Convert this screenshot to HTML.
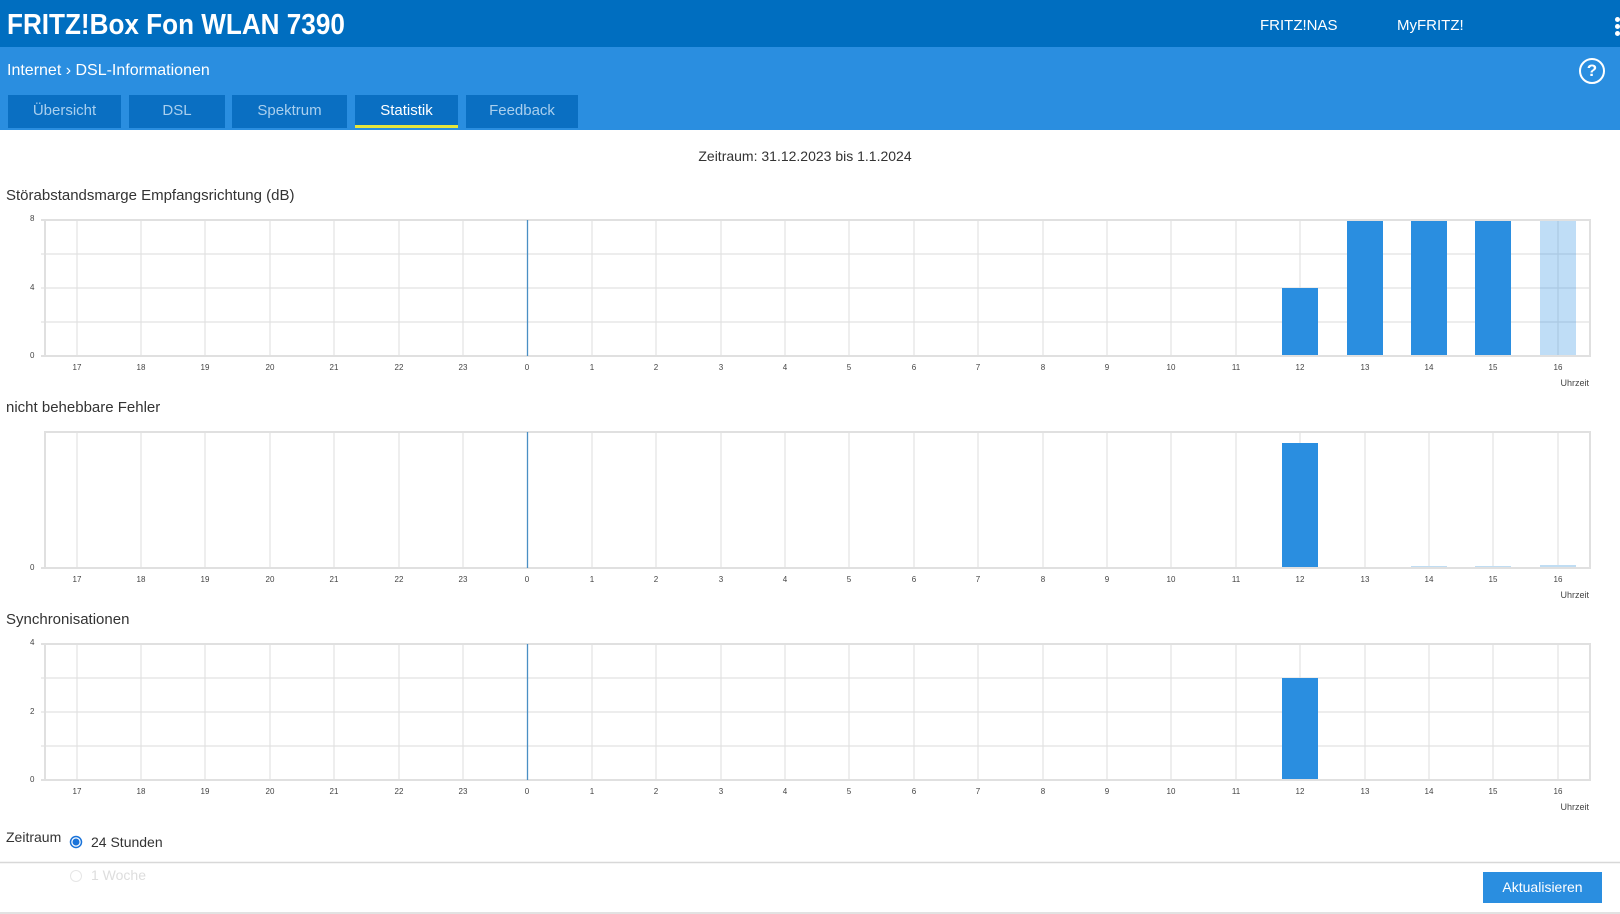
<!DOCTYPE html>
<html><head><meta charset="utf-8"><style>
*{margin:0;padding:0;box-sizing:border-box}
body{width:1620px;height:914px;overflow:hidden;background:#fff;font-family:"Liberation Sans",sans-serif;position:relative;color:#333}
.top{position:absolute;left:0;top:0;width:1620px;height:47px;background:#006ec0}
.title{position:absolute;left:7px;top:9px;font-size:29px;font-weight:bold;color:#fff;transform:scaleX(0.9);transform-origin:0 0}
.toplink{position:absolute;top:17px;font-size:15px;color:#fff}
.band{position:absolute;left:0;top:47px;width:1620px;height:83px;background:#2a8ee0}
.crumb{position:absolute;left:7px;top:15px;font-size:16px;color:#fff}
.tab{position:absolute;top:95px;height:33px;background:#0a6fc2;color:#a9cfee;font-size:15px;text-align:center;line-height:31px}
.tab.act{color:#fff;border-bottom:3px solid #e6e63c}
.help{position:absolute;left:1579px;top:11px;width:26px;height:26px;border:2.5px solid #fff;border-radius:50%;color:#fff;font-weight:bold;font-size:17px;text-align:center;line-height:21px}
.dots{position:absolute;left:1615px;top:17px;width:5px}
.dots i{display:block;width:5px;height:5px;border-radius:50%;background:#fff;margin-bottom:2px}
.h{position:absolute;left:6px;font-size:15px;color:#333}
svg{position:absolute;left:0;top:0}
</style></head><body>
<div class="top"><div class="title">FRITZ!Box Fon WLAN 7390</div>
<div class="toplink" style="left:1260px">FRITZ!NAS</div>
<div class="toplink" style="left:1397px">MyFRITZ!</div>
<div class="dots"><i></i><i></i><i></i></div></div>
<div class="band"><div class="crumb">Internet &#x203A; DSL-Informationen</div><div class="help">?</div></div>
<div class="tab" style="left:8px;width:113px">Übersicht</div>
<div class="tab" style="left:129px;width:96px">DSL</div>
<div class="tab" style="left:232px;width:115px">Spektrum</div>
<div class="tab act" style="left:355px;width:103px">Statistik</div>
<div class="tab" style="left:466px;width:112px">Feedback</div>
<div style="position:absolute;left:0;width:1610px;top:148px;text-align:center;font-size:14px;color:#333">Zeitraum: 31.12.2023 bis 1.1.2024</div>
<div class="h" style="top:187px">Störabstandsmarge Empfangsrichtung (dB)</div>
<div class="h" style="top:399px">nicht behebbare Fehler</div>
<div class="h" style="top:611px">Synchronisationen</div>

<svg width="1620" height="914" font-family="Liberation Sans, sans-serif" font-size="8" fill="#444">
<defs>
<g id="vg" stroke="#e2e2e2" stroke-width="1.2">
<line x1="77" y1="0" x2="77" y2="136"/><line x1="141" y1="0" x2="141" y2="136"/><line x1="205" y1="0" x2="205" y2="136"/><line x1="270" y1="0" x2="270" y2="136"/><line x1="334" y1="0" x2="334" y2="136"/><line x1="399" y1="0" x2="399" y2="136"/><line x1="463" y1="0" x2="463" y2="136"/><line x1="592" y1="0" x2="592" y2="136"/><line x1="656" y1="0" x2="656" y2="136"/><line x1="721" y1="0" x2="721" y2="136"/><line x1="785" y1="0" x2="785" y2="136"/><line x1="849" y1="0" x2="849" y2="136"/><line x1="914" y1="0" x2="914" y2="136"/><line x1="978" y1="0" x2="978" y2="136"/><line x1="1043" y1="0" x2="1043" y2="136"/><line x1="1107" y1="0" x2="1107" y2="136"/><line x1="1171" y1="0" x2="1171" y2="136"/><line x1="1236" y1="0" x2="1236" y2="136"/><line x1="1300" y1="0" x2="1300" y2="136"/><line x1="1365" y1="0" x2="1365" y2="136"/><line x1="1429" y1="0" x2="1429" y2="136"/><line x1="1493" y1="0" x2="1493" y2="136"/><line x1="1558" y1="0" x2="1558" y2="136"/>
</g>
</defs>
<g transform="translate(0,220)">
<use href="#vg"/>
<g stroke="#e2e2e2" stroke-width="1.2"><line x1="41" y1="34" x2="1590" y2="34"/><line x1="41" y1="68" x2="1590" y2="68"/><line x1="41" y1="102" x2="1590" y2="102"/></g>
<rect x="1282" y="68" width="36" height="68" fill="#2a8ee0"/>
<rect x="1347" y="0" width="36" height="136" fill="#2a8ee0"/>
<rect x="1411" y="0" width="36" height="136" fill="#2a8ee0"/>
<rect x="1475" y="0" width="36" height="136" fill="#2a8ee0"/>
<rect x="1540" y="0" width="36" height="136" fill="#2a8ee0" opacity="0.3"/>
<rect x="45" y="0" width="1545" height="136" fill="none" stroke="#e0e0e0" stroke-width="2"/>
<line x1="41" y1="0" x2="45" y2="0" stroke="#e0e0e0" stroke-width="2"/><line x1="41" y1="136" x2="45" y2="136" stroke="#e0e0e0" stroke-width="2"/>
<line x1="527.5" y1="0" x2="527.5" y2="136" stroke="#4a8fc4" stroke-width="1.3"/>
<text x="30" y="1">8</text><text x="30" y="70">4</text><text x="30" y="138">0</text>
<g text-anchor="middle"><text x="77" y="150">17</text><text x="141" y="150">18</text><text x="205" y="150">19</text><text x="270" y="150">20</text><text x="334" y="150">21</text><text x="399" y="150">22</text><text x="463" y="150">23</text><text x="527" y="150">0</text><text x="592" y="150">1</text><text x="656" y="150">2</text><text x="721" y="150">3</text><text x="785" y="150">4</text><text x="849" y="150">5</text><text x="914" y="150">6</text><text x="978" y="150">7</text><text x="1043" y="150">8</text><text x="1107" y="150">9</text><text x="1171" y="150">10</text><text x="1236" y="150">11</text><text x="1300" y="150">12</text><text x="1365" y="150">13</text><text x="1429" y="150">14</text><text x="1493" y="150">15</text><text x="1558" y="150">16</text></g>
<text x="1589" y="166" text-anchor="end" font-size="9">Uhrzeit</text>
</g>
<g transform="translate(0,432)">
<use href="#vg"/>
<rect x="1282" y="11" width="36" height="125" fill="#2a8ee0"/>
<rect x="1411" y="134" width="36" height="2" fill="#c0ddf3"/><rect x="1475" y="134" width="36" height="2" fill="#c0ddf3"/><rect x="1540" y="133" width="36" height="3" fill="#c0ddf3"/>
<rect x="45" y="0" width="1545" height="136" fill="none" stroke="#e0e0e0" stroke-width="2"/>
<line x1="41" y1="136" x2="45" y2="136" stroke="#e0e0e0" stroke-width="2"/>
<line x1="527.5" y1="0" x2="527.5" y2="136" stroke="#4a8fc4" stroke-width="1.3"/>
<text x="30" y="138">0</text>
<g text-anchor="middle"><text x="77" y="150">17</text><text x="141" y="150">18</text><text x="205" y="150">19</text><text x="270" y="150">20</text><text x="334" y="150">21</text><text x="399" y="150">22</text><text x="463" y="150">23</text><text x="527" y="150">0</text><text x="592" y="150">1</text><text x="656" y="150">2</text><text x="721" y="150">3</text><text x="785" y="150">4</text><text x="849" y="150">5</text><text x="914" y="150">6</text><text x="978" y="150">7</text><text x="1043" y="150">8</text><text x="1107" y="150">9</text><text x="1171" y="150">10</text><text x="1236" y="150">11</text><text x="1300" y="150">12</text><text x="1365" y="150">13</text><text x="1429" y="150">14</text><text x="1493" y="150">15</text><text x="1558" y="150">16</text></g>
<text x="1589" y="166" text-anchor="end" font-size="9">Uhrzeit</text>
</g>
<g transform="translate(0,644)">
<use href="#vg"/>
<g stroke="#e2e2e2" stroke-width="1.2"><line x1="41" y1="34" x2="1590" y2="34"/><line x1="41" y1="68" x2="1590" y2="68"/><line x1="41" y1="102" x2="1590" y2="102"/></g>
<rect x="1282" y="34" width="36" height="102" fill="#2a8ee0"/>
<rect x="45" y="0" width="1545" height="136" fill="none" stroke="#e0e0e0" stroke-width="2"/>
<line x1="41" y1="0" x2="45" y2="0" stroke="#e0e0e0" stroke-width="2"/><line x1="41" y1="136" x2="45" y2="136" stroke="#e0e0e0" stroke-width="2"/>
<line x1="527.5" y1="0" x2="527.5" y2="136" stroke="#4a8fc4" stroke-width="1.3"/>
<text x="30" y="1">4</text><text x="30" y="70">2</text><text x="30" y="138">0</text>
<g text-anchor="middle"><text x="77" y="150">17</text><text x="141" y="150">18</text><text x="205" y="150">19</text><text x="270" y="150">20</text><text x="334" y="150">21</text><text x="399" y="150">22</text><text x="463" y="150">23</text><text x="527" y="150">0</text><text x="592" y="150">1</text><text x="656" y="150">2</text><text x="721" y="150">3</text><text x="785" y="150">4</text><text x="849" y="150">5</text><text x="914" y="150">6</text><text x="978" y="150">7</text><text x="1043" y="150">8</text><text x="1107" y="150">9</text><text x="1171" y="150">10</text><text x="1236" y="150">11</text><text x="1300" y="150">12</text><text x="1365" y="150">13</text><text x="1429" y="150">14</text><text x="1493" y="150">15</text><text x="1558" y="150">16</text></g>
<text x="1589" y="166" text-anchor="end" font-size="9">Uhrzeit</text>
</g>
<circle cx="76" cy="842" r="5.5" fill="#fff" stroke="#1a73d9" stroke-width="1.5"/><circle cx="76" cy="842" r="3.5" fill="#1a73d9"/>
<circle cx="76" cy="876" r="5.5" fill="#fff" stroke="#e6e6e6" stroke-width="1"/>
<line x1="0" y1="862.5" x2="1620" y2="862.5" stroke="#d8d8d8" stroke-width="1.5"/>
<line x1="0" y1="913" x2="1620" y2="913" stroke="#d8d8d8" stroke-width="1.5"/>
</svg>
<div style="position:absolute;left:6px;top:829px;font-size:14px">Zeitraum</div>
<div style="position:absolute;left:91px;top:834px;font-size:14px">24 Stunden</div>
<div style="position:absolute;left:91px;top:867px;font-size:14px;color:#ddd">1 Woche</div>
<div style="position:absolute;left:1483px;top:872px;width:119px;height:31px;background:#2a8ee0;color:#fff;font-size:14px;text-align:center;line-height:31px">Aktualisieren</div>
</body></html>
